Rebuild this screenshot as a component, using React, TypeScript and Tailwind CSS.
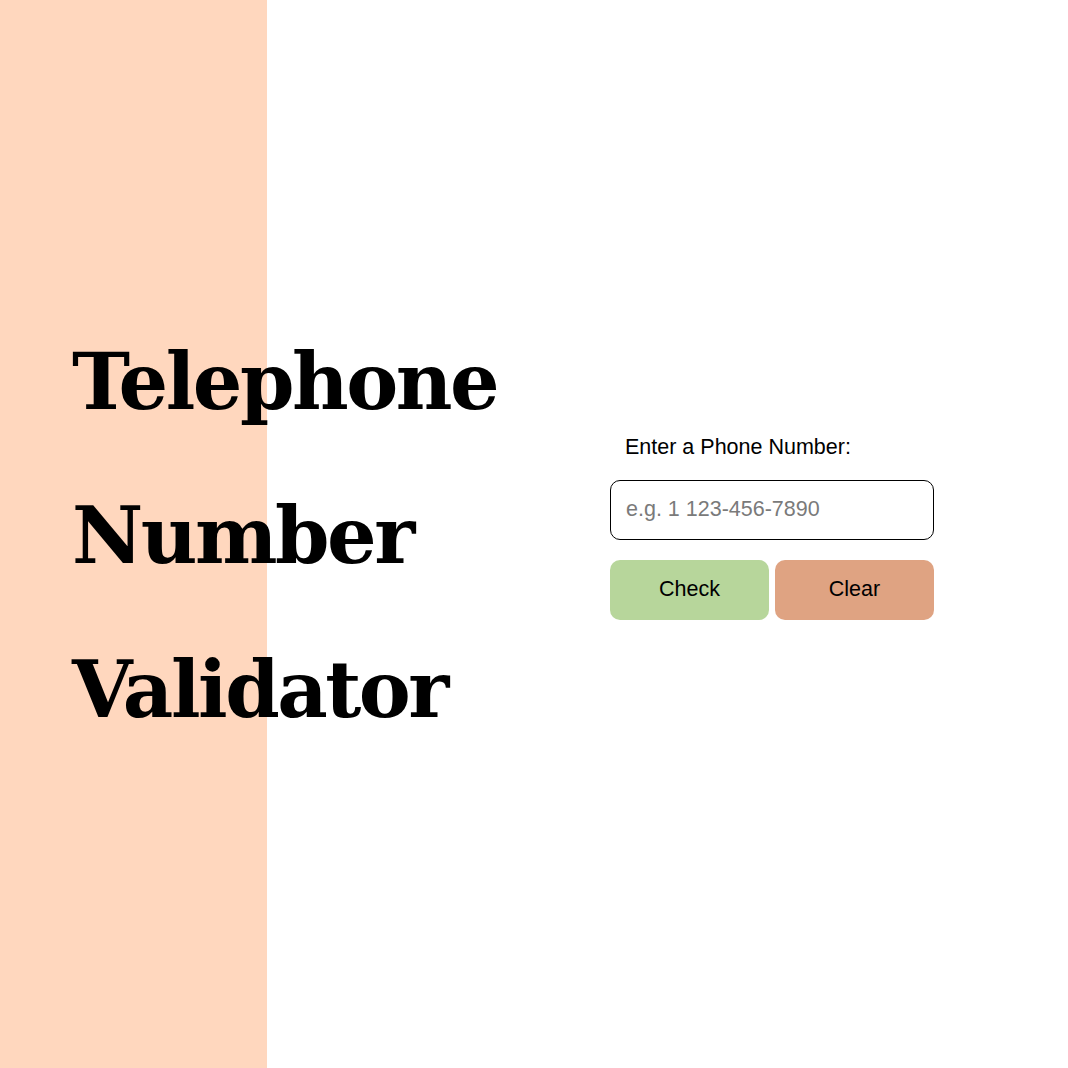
import React, { useState } from "react";

export default function App() {
  const [phone, setPhone] = useState("");

  return (
    <div className="flex h-[1068px] w-full bg-white font-['Liberation_Sans',Arial,sans-serif]">
      {/* Left panel */}
      <div className="flex h-full w-[267px] shrink-0 items-center bg-[#ffd7be]">
        <h1 className="relative z-10 mt-[4px] whitespace-nowrap pl-[72px] font-['DejaVu_Serif',serif] text-[78px] font-bold leading-[154px] tracking-[-2.5px] text-black">
          Telephone
          <br />
          Number
          <br />
          Validator
        </h1>
      </div>

      {/* Form */}
      <div className="flex flex-1 items-center pl-[343px]">
        <div className="mt-[-14px] flex w-[324px] flex-col">
          <label htmlFor="user-input" className="mb-[21px] pl-[15px] text-[21.5px] leading-[24px] text-black">
            Enter a Phone Number:
          </label>
          <input
            id="user-input"
            value={phone}
            onChange={(e) => setPhone(e.target.value)}
            placeholder="e.g. 1 123-456-7890"
            className="h-[60px] w-full rounded-[10px] border border-black px-[15px] text-[21.5px] outline-none placeholder:text-[#7a7a7a]"
          />
          <div className="mt-[20px] flex gap-[6px]">
            <button className="h-[60px] flex-1 rounded-[10px] bg-[#b7d69b] text-[21.5px] text-black">
              Check
            </button>
            <button
              onClick={() => setPhone("")}
              className="h-[60px] flex-1 rounded-[10px] bg-[#dfa382] text-[21.5px] text-black"
            >
              Clear
            </button>
          </div>
        </div>
      </div>
    </div>
  );
}
